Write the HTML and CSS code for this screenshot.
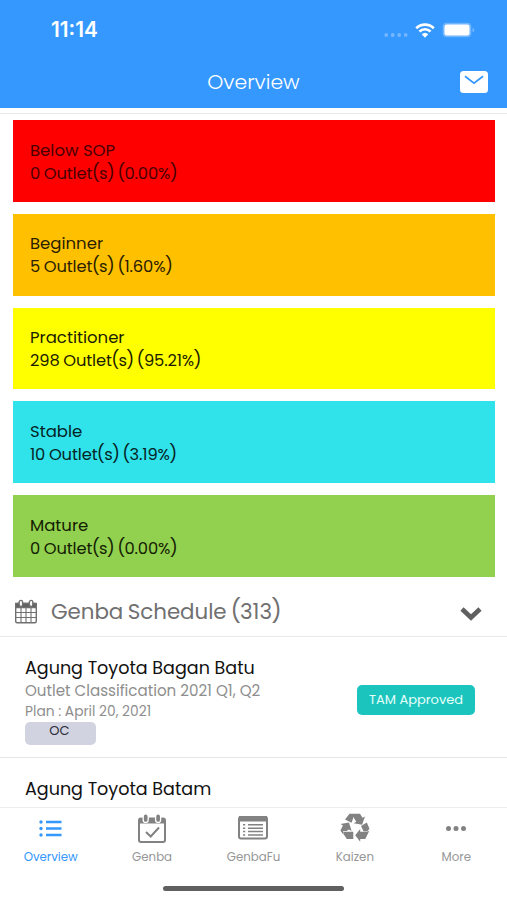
FILE: index.html
```html
<!DOCTYPE html>
<html lang="en">
<head>
<meta charset="utf-8">
<title>Overview</title>
<link rel="stylesheet" href="styles.css">
</head>
<body>
<div class="app">
  <header class="top">
    <div class="status">
      <span class="time">11:14</span>
      <span class="signals">
        <svg class="dots" width="24" height="6" viewBox="0 0 24 6"><circle cx="2.2" cy="3" r="1.9"/><circle cx="8.7" cy="3" r="1.9"/><circle cx="15.2" cy="3" r="1.9"/><circle cx="21.7" cy="3" r="1.9"/></svg>
        <svg class="wifi" width="20" height="15" viewBox="0 0 20 15"><path d="M1.2 5.2a12.6 12.6 0 0 1 17.6 0M4.4 8.5a8 8 0 0 1 11.2 0"/><path class="solid" d="M6.7 11.3a4.8 4.8 0 0 1 6.6 0L10 14.7z"/></svg>
        <svg class="battery" width="33" height="16" viewBox="0 0 33 16"><rect class="shell" x=".7" y=".7" width="28.6" height="14.6" rx="4"/><rect class="charge" x="2.5" y="2.5" width="25" height="11" rx="2.3"/><path class="tip" d="M30.5 5.5q2 1 2 2.5t-2 2.5z"/></svg>
      </span>
    </div>
    <div class="nav">
      <h1>Overview</h1>
      <svg class="mail" width="28" height="22" viewBox="0 0 28 22"><rect width="28" height="22" rx="3.5"/><path d="M5 5.2l9 7 9-7"/></svg>
    </div>
  </header>
  <main>
    <section class="levels">
      <div class="level red"><span>Below SOP</span><span class="count">0 Outlet<i>(</i>s<i>)</i> <i>(</i>0.00%<i>)</i></span></div>
      <div class="level amber"><span>Beginner</span><span class="count">5 Outlet<i>(</i>s<i>)</i> <i>(</i>1.60%<i>)</i></span></div>
      <div class="level yellow"><span>Practitioner</span><span class="count">298 Outlet<i>(</i>s<i>)</i> <i>(</i>95.21%<i>)</i></span></div>
      <div class="level cyan"><span>Stable</span><span class="count">10 Outlet<i>(</i>s<i>)</i> <i>(</i>3.19%<i>)</i></span></div>
      <div class="level green"><span>Mature</span><span class="count">0 Outlet<i>(</i>s<i>)</i> <i>(</i>0.00%<i>)</i></span></div>
    </section>
    <section class="schedule">
      <div class="heading">
        <svg class="cal" width="24" height="25" viewBox="0 0 24 25"><rect x="1.7" y="4.5" width="20.6" height="19.3" rx="1.5"/><path class="band" d="M1.7 4.5h20.6v4H1.7z"/><path class="grid" d="M2 13.5h20M2 18.5h20M7 9v15M12 9v15M17 9v15"/><rect class="ring" x="5.2" y="1.4" width="3.4" height="6" rx="1.7"/><rect class="ring" x="15.4" y="1.4" width="3.4" height="6" rx="1.7"/></svg>
        <h2>Genba Schedule <i>(</i>313<i>)</i></h2>
        <svg class="chevron" width="22" height="15" viewBox="0 0 22 15"><path d="M2 3l9 8.5L20 3"/></svg>
      </div>
      <article class="visit">
        <div class="info">
          <h3>Agung Toyota Bagan Batu</h3>
          <p class="kind">Outlet Classification 2021 Q1, Q2</p>
          <p class="plan">Plan : April 20, 2021</p>
          <span class="tag">OC</span>
        </div>
        <span class="approved">TAM Approved</span>
      </article>
      <article class="visit">
        <div class="info"><h3>Agung Toyota Batam</h3></div>
      </article>
    </section>
  </main>
  <footer>
    <nav class="tabs">
      <a class="tab active"><svg width="30" height="34" viewBox="0 0 30 34"><path class="line" d="M10 11h15.5M10 17.5h15.5M10 24h15.5"/><circle cx="5" cy="11" r="1.7"/><circle cx="5" cy="17.5" r="1.7"/><circle cx="5" cy="24" r="1.7"/></svg><span>Overview</span></a>
      <a class="tab"><svg width="30" height="34" viewBox="0 0 30 34"><rect class="line" x="2" y="7.5" width="26" height="23.5" rx="2"/><path d="M2 7h26v5.5H2z"/><rect class="ring" x="6.2" y="2.8" width="5" height="8.6" rx="2.5"/><rect class="ring" x="18.6" y="2.8" width="5" height="8.6" rx="2.5"/><path class="line" d="M9 21l4.7 4.5L22 16.5"/></svg><span>Genba</span></a>
      <a class="tab"><svg width="32" height="34" viewBox="0 0 32 34"><rect class="line" x="2" y="6" width="28" height="21.5" rx="2"/><path d="M2 5h28v5.5H2z"/><path class="line thin" d="M11 13.8h15M11 17.2h15M11 20.6h15M11 24h15M6 13.8h2.2M6 17.2h2.2M6 20.6h2.2M6 24h2.2"/></svg><span>GenbaFu</span></a>
      <a class="tab"><svg width="30" height="34" viewBox="0 0 30 34"><path d="M9.5 2.800h5.300l-3.300 9L5 8.500zM14 2.800h6l2.500 3.900 2.500-1.200-2.900 8.200-8.400-1.500 2.600-1.500-2.500-4zM21 15l5.800-3.400 2.700 6.100-2.200 2.500h-3.800zM29.200 20L25.300 28H20.200v2.800l-5-6.500 5-6.200v2.700h6.500zM3.500 20.700h9.800V28H6.800l-3.300-5zM.5 13l8.500-1.400L11.600 20 8.800 18.400 6.600 20H3.200v3.500L.4 19.500l2.500-5z"/></svg><span>Kaizen</span></a>
      <a class="tab"><svg width="30" height="34" viewBox="0 0 30 34"><circle cx="7.5" cy="17.5" r="2.5"/><circle cx="15" cy="17.5" r="2.5"/><circle cx="22.5" cy="17.5" r="2.5"/></svg><span>More</span></a>
    </nav>
    <div class="home"></div>
  </footer>
</div>
</body>
</html>
```
FILE: styles.css
```css
* { box-sizing: border-box; }
body { margin: 0; background: #fff; font-family: Poppins, Inter, sans-serif; color: #111; }
h1, h2, h3, p { margin: 0; font-weight: 400; white-space: nowrap; }
i { font-style: normal; font-size: 1.08em; line-height: 1; margin: 0 -.035em; }
svg { display: block; flex: none; }
.app { height: 900px; display: flex; flex-direction: column; overflow: hidden; }
.top { height: 108px; flex: none; background: #3598fe; color: #fff; }
.status { height: 57px; padding: 3px 32px 0 51px; display: flex; align-items: center; justify-content: space-between; }
.time { font: 600 20.8px/24px Inter, sans-serif; }
.signals { display: flex; align-items: center; }
.dots { fill: #74b6ff; margin: 9px 7px 0 0; }
.wifi { fill: none; stroke: #fff; stroke-width: 2.6; margin-right: 7px; }
.wifi .solid { fill: #fff; stroke: none; }
.shell, .tip { fill: #70b5ff; }
.charge { fill: #fff; }
.nav { height: 50px; padding: 0 19px; display: grid; grid-template-columns: 28px 1fr 28px; align-items: center; }
.nav h1 { grid-column: 2; text-align: center; font-size: 20.4px; line-height: 50px; font-weight: 300; }
.mail { fill: #fff; }
.mail path { fill: none; stroke: #3598fe; stroke-width: 1.8; }
main { flex: 1; min-height: 0; overflow: hidden; }
.levels { margin-top: 5px; border-top: 1px solid #e9e9e9; padding: 6px 12px 0 13px; display: flex; flex-direction: column; gap: 12px; }
.level { height: 81.8px; padding: 18.6px 17px 0; display: flex; flex-direction: column; font-size: 16.5px; line-height: 24px; white-space: nowrap; }
.level span { height: 23px; align-self: flex-start; }
.level .count { font-size: 16.3px; letter-spacing: -.1px; word-spacing: -.6px; }
.red { background: #f00; color: #480000; }
.amber { background: #ffc000; color: #2a1d00; }
.yellow { background: #ff0; color: #1c1c00; }
.cyan { background: #30e3ea; color: #052325; }
.green { background: #92d050; color: #122000; }
.heading { height: 60px; border-bottom: 1px solid #e9e9e9; padding: 11px 25px 0 14px; display: flex; align-items: center; color: #707070; }
.heading h2 { font-size: 21.4px; letter-spacing: -.06px; word-spacing: -1px; margin-left: 13px; flex: 1; }
.cal { fill: none; stroke: #707070; stroke-width: 1.4; }
.cal .band { fill: #606060; }
.cal .grid { stroke-width: 1.1; }
.cal .ring { fill: #fff; }
.chevron { fill: none; stroke: #606060; stroke-width: 4.6; margin-top: 4px; }
.visit { height: 121px; border-bottom: 1px solid #e6e6e6; padding: 18px 32px 0 25px; display: flex; justify-content: space-between; }
.info { display: flex; flex-direction: column; align-items: flex-start; }
.info h3 { font-size: 17.55px; line-height: 26px; }
.kind { font-size: 15.1px; line-height: 20px; color: #8e8e8e; }
.plan { font-size: 13.8px; line-height: 21px; color: #8e8e8e; }
.tag { width: 71px; height: 23px; padding-right: 2px; border-radius: 5px; background: #d1d3e1; color: #2b2c38; font-size: 13px; line-height: 18px; text-align: center; }
.approved { width: 118px; height: 30px; margin-top: 30px; border-radius: 5px; background: #1bc5bd; color: #e6fffb; font-size: 13px; line-height: 30px; text-align: center; white-space: nowrap; }
footer { height: 93px; flex: none; border-top: 1px solid #ededed; background: #fff; }
.tabs { display: grid; grid-template-columns: repeat(5, 1fr); height: 78px; }
.tab { display: flex; flex-direction: column; align-items: center; padding-top: 3px; fill: #828282; color: #969696; font-size: 11.8px; }
.tab span { line-height: 18px; margin-top: 3px; }
.tab .line { fill: none; stroke: #828282; stroke-width: 2; }
.tab .thin { stroke-width: 1.5; }
.tab .ring { fill: #828282; stroke: #fff; stroke-width: 1.3; }
.tab.active { fill: #3598fe; color: #3598fe; }
.tab.active .line { stroke: #3598fe; stroke-width: 2.7; }
.home { width: 181px; height: 5px; margin: 0 auto; border-radius: 3px; background: #606060; }
```
